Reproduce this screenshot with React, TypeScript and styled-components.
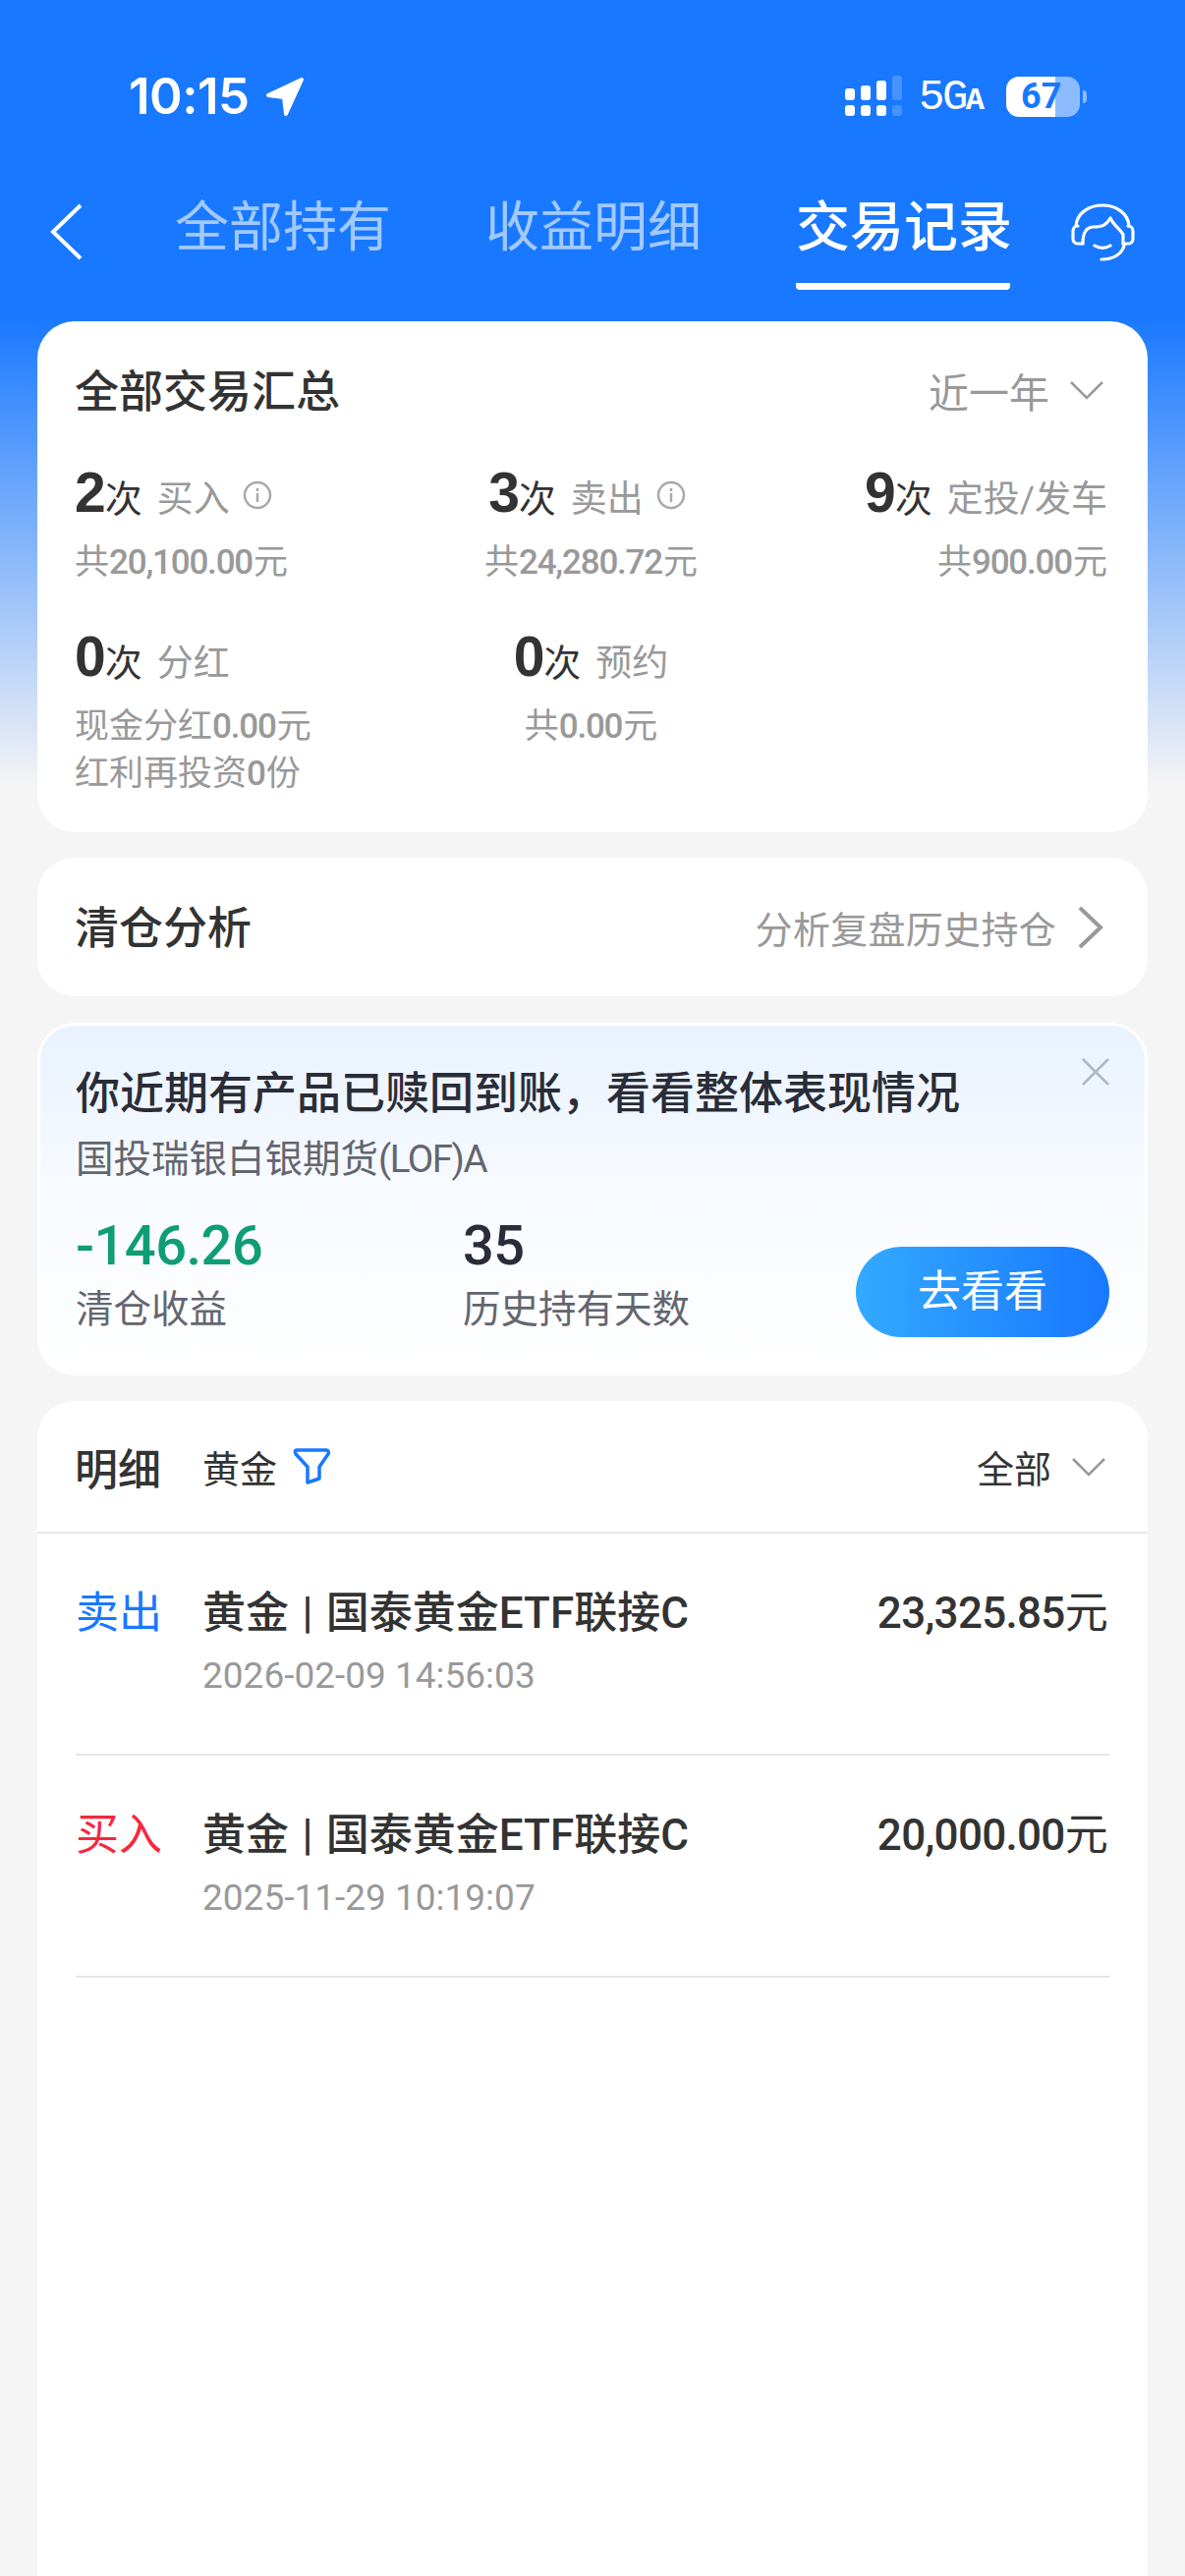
import React, { FC } from "react";
import styled, { createGlobalStyle } from "styled-components";

const GlobalStyle = createGlobalStyle`
  html, body {
    margin: 0;
    padding: 0;
  }
  body {
    font-family: Roboto, "Noto Sans CJK SC", sans-serif;
  }
`;

const Page = styled.div`
  width: 1206px;
  height: 2622px;
  overflow: hidden;
  display: flex;
  flex-direction: column;
  background: linear-gradient(to bottom, #1878ff 0, #1878ff 320px, #f5f5f5 800px);
`;

const StatusBar = styled.div`
  height: 56px;
  padding: 70px 0 0 131px;
  display: flex;
  align-items: center;
  color: #fff;
`;

const Clock = styled.span`
  font-family: Inter, sans-serif;
  font-size: 51px;
  font-weight: 600;
  letter-spacing: -0.500px;
  line-height: 56px;
  width: 139px;
`;

const ArrowIcon = styled.svg`
  width: 41px;
  height: 40px;
`;

const SignalIcon = styled.svg`
  width: 60px;
  height: 42px;
  margin-left: 547px;
`;

const NetworkLabel = styled.span`
  font-family: "Liberation Mono", monospace;
  font-size: 44px;
  letter-spacing: -2.500px;
  line-height: 42px;
  margin-left: 17px;
  padding-top: 5px;
  width: 89px;
  small {
    font-size: 32px;
    font-weight: 700;
    letter-spacing: 0;
  }
`;

const Battery = styled.div`
  position: relative;
  width: 75px;
  height: 41px;
  border-radius: 13px;
  background: linear-gradient(to right, #fff 0, #fff 50px, rgba(255, 255, 255, 0.5) 50px);
  color: #1878ff;
  font-size: 36px;
  font-weight: 700;
  line-height: 41px;
  padding-left: 15px;
  box-sizing: border-box;
  &::after {
    content: "";
    position: absolute;
    left: 78px;
    top: 14px;
    width: 4px;
    height: 13px;
    border-radius: 0 6px 6px 0;
    background: rgba(255, 255, 255, 0.5);
  }
`;

const NavBar = styled.div`
  display: flex;
  align-items: flex-start;
  margin-top: 66px;
  padding-left: 50px;
`;

const BackIcon = styled.svg`
  width: 34px;
  height: 58px;
  margin: 15px 94px 0 0;
`;

const Tabs = styled.div`
  display: flex;
  gap: 98px;
`;

const Tab = styled.div<{ $active?: boolean }>`
  width: 218px;
  font-size: 55px;
  font-weight: ${(p) => (p.$active ? 500 : 400)};
  line-height: 72px;
  color: ${(p) => (p.$active ? "#fff" : "rgba(255, 255, 255, 0.6)")};
  text-align: center;
  white-space: nowrap;
  padding: 3px 0 21px;
  border-bottom: 7px solid ${(p) => (p.$active ? "#fff" : "transparent")};
  border-radius: 0 0 4px 4px;
`;

const HeadsetIcon = styled.svg`
  width: 90px;
  height: 80px;
  margin: 5px 0 0 52px;
`;

const Card = styled.div`
  margin: 0 38px;
  background: #fff;
  border-radius: 38px;
  box-sizing: border-box;
`;

const SummaryCard = styled(Card)`
  margin-top: 32px;
  padding: 40px 41px 35px 38px;
`;

const CardHead = styled.div`
  display: flex;
  justify-content: space-between;
  align-items: center;
  height: 60px;
`;

const CardTitle = styled.div`
  font-size: 45px;
  font-weight: 500;
  color: #333;
  line-height: 60px;
  padding-top: 5px;
`;

const RangePicker = styled.div`
  display: flex;
  align-items: center;
  gap: 20px;
  padding-right: 3px;
  font-size: 41px;
  color: #999;
`;

const Caret = styled.svg`
  width: 36px;
  height: 22px;
`;

const StatGrid = styled.div`
  display: grid;
  grid-template-columns: repeat(3, 1fr);
  row-gap: 41px;
  margin-top: 44px;
`;

const StatCell = styled.div<{ $align: string }>`
  display: flex;
  flex-direction: column;
  align-items: ${(p) => p.$align};
  gap: 18px;
`;

const StatTop = styled.div`
  display: flex;
  align-items: baseline;
  height: 60px;
  line-height: 60px;
  white-space: nowrap;
`;

const StatCount = styled.span`
  font-family: "Liberation Sans", sans-serif;
  font-size: 57px;
  font-weight: 700;
  letter-spacing: -3px;
  color: #333;
`;

const StatUnit = styled.span`
  font-size: 38px;
  color: #333;
  margin-left: 2px;
`;

const StatName = styled.span`
  font-size: 37px;
  color: #999;
  margin-left: 15px;
`;

const InfoIcon = styled.svg`
  width: 30px;
  height: 30px;
  margin: 6px 8px 0 13px;
  align-self: center;
`;

const StatNote = styled.div`
  font-size: 35px;
  line-height: 48px;
  color: #999;
  white-space: nowrap;
  b {
    font-weight: 500;
    letter-spacing: -1.200px;
    margin-right: 1px;
  }
`;

const ClearCard = styled(Card)`
  margin-top: 26px;
  height: 141px;
  padding: 0 43px 0 38px;
  display: flex;
  align-items: center;
  justify-content: space-between;
`;

const ClearHint = styled.div`
  display: flex;
  align-items: center;
  gap: 22px;
  font-size: 38px;
  letter-spacing: 0.300px;
  color: #999;
`;

const ChevronIcon = styled.svg`
  width: 28px;
  height: 44px;
`;

const BannerCard = styled(Card)`
  position: relative;
  margin-top: 27px;
  height: 359px;
  border: 3px solid #fff;
  padding: 36px 36px 0;
  background: linear-gradient(to bottom, #e9f2ff 0, #f8fbff 50%, #fff 100%);
  background-origin: border-box;
`;

const CloseIcon = styled.svg`
  position: absolute;
  right: 35px;
  top: 32px;
  width: 30px;
  height: 30px;
`;

const BannerTitle = styled.div`
  font-size: 45px;
  font-weight: 500;
  line-height: 60px;
  padding-top: 4px;
  margin-bottom: -4px;
  color: #2a2d38;
  white-space: nowrap;
`;

const BannerSub = styled.div`
  margin-top: 15px;
  font-size: 38.500px;
  line-height: 50px;
  color: #63666f;
  span {
    letter-spacing: -1.500px;
  }
`;

const BannerFoot = styled.div`
  display: flex;
  align-items: flex-end;
  margin-top: 33px;
`;

const BannerStat = styled.div<{ $width: number }>`
  width: ${(p) => p.$width}px;
  flex: none;
`;

const BannerValue = styled.div<{ $color: string }>`
  font-size: 56px;
  font-weight: 500;
  letter-spacing: -0.500px;
  line-height: 60px;
  color: ${(p) => p.$color};
`;

const BannerLabel = styled.div`
  margin-top: 7px;
  font-size: 38.500px;
  line-height: 56px;
  color: #63666f;
`;

const GoButton = styled.div`
  margin-left: auto;
  width: 258px;
  height: 92px;
  border-radius: 46px;
  background: linear-gradient(to right, #33a9ff, #1878ff);
  color: #fff;
  font-size: 44px;
  line-height: 92px;
  text-align: center;
`;

const DetailCard = styled(Card)`
  flex: 1;
  margin-top: 26px;
  border-radius: 38px 38px 0 0;
`;

const DetailHead = styled.div`
  display: flex;
  align-items: center;
  height: 133px;
  padding: 0 42px 0 38px;
  border-bottom: 2px solid #e6e6e6;
`;

const DetailTitle = styled.div`
  font-size: 44px;
  font-weight: 500;
  color: #333;
  width: 130px;
`;

const FilterName = styled.div`
  font-size: 38px;
  color: #333;
`;

const FilterIcon = styled.svg`
  width: 40px;
  height: 38px;
  margin: 1px 0 0 16px;
`;

const TypeFilter = styled.div`
  margin-left: auto;
  display: flex;
  align-items: center;
  gap: 20px;
  font-size: 38px;
  color: #333;
`;

const TradeRow = styled.div`
  display: flex;
  margin: 0 39px;
  padding: 51px 0 54px;
  border-bottom: 2px solid #e6e6e6;
`;

const TradeType = styled.div<{ $color: string }>`
  width: 129px;
  font-size: 44px;
  line-height: 60px;
  color: ${(p) => p.$color};
`;

const TradeBody = styled.div`
  flex: 1;
`;

const TradeName = styled.div`
  font-size: 44px;
  font-weight: 500;
  line-height: 60px;
  word-spacing: 2.500px;
  color: #333;
`;

const TradeTime = styled.div`
  margin-top: 9px;
  font-size: 37px;
  line-height: 50px;
  color: #999;
`;

const TradeAmount = styled.div`
  font-size: 44px;
  font-weight: 500;
  line-height: 60px;
  letter-spacing: -0.700px;
  padding-right: 2px;
  color: #333;
  span {
    font-weight: 400;
  }
`;

const Info: FC = () => (
  <InfoIcon viewBox="0 0 30 30" fill="none" stroke="#aaa" strokeWidth="2.500">
    <circle cx="15" cy="15" r="13" />
    <path d="M15 13v9M15 8v3" />
  </InfoIcon>
);

const CaretDown: FC = () => (
  <Caret viewBox="0 0 36 22" fill="none" stroke="#999" strokeWidth="2.500">
    <path d="M2 3l16 16L34 3" />
  </Caret>
);

const trades = [
  { type: "卖出", color: "#1878ff", time: "2026-02-09 14:56:03", amount: "23,325.85" },
  { type: "买入", color: "#f5283f", time: "2025-11-29 10:19:07", amount: "20,000.00" },
];

const App: FC = () => {
  return (
    <Page>
      <GlobalStyle />
      <StatusBar>
        <Clock>10:15</Clock>
        <ArrowIcon viewBox="0 0 41 40">
          <path d="M37 3L3 19l16 2 2 17z" fill="#fff" stroke="#fff" strokeWidth="4" strokeLinejoin="round" />
        </ArrowIcon>
        <SignalIcon viewBox="0 0 60 42">
          <g fill="#fff">
            <rect x="2" y="30" width="10" height="11" rx="3" />
            <rect x="18" y="30" width="10" height="11" rx="3" />
            <rect x="34" y="30" width="10" height="11" rx="3" />
            <rect x="2" y="13" width="10" height="12" rx="3" />
            <rect x="18" y="10" width="10" height="15" rx="3" />
            <rect x="34" y="5" width="10" height="20" rx="3" />
          </g>
          <g fill="#fff" opacity="0.2">
            <rect x="50" y="30" width="10" height="11" rx="3" />
            <rect x="50" y="0" width="10" height="25" rx="3" />
          </g>
        </SignalIcon>
        <NetworkLabel>
          5G<small>A</small>
        </NetworkLabel>
        <Battery>67</Battery>
      </StatusBar>

      <NavBar>
        <BackIcon viewBox="0 0 34 58" fill="none" stroke="#fff" strokeWidth="4">
          <path d="M32 2L4 29l28 27" />
        </BackIcon>
        <Tabs>
          <Tab>全部持有</Tab>
          <Tab>收益明细</Tab>
          <Tab $active>交易记录</Tab>
        </Tabs>
        <HeadsetIcon viewBox="0 0 90 80" fill="none" stroke="#fff" strokeWidth="3.200" strokeLinecap="round" strokeLinejoin="round">
          <path d="M15 33C16 20 28 12 42 12s26 8 27 21" />
          <path d="M22 51h-5a5 5 0 0 1-5-5v-8a5 5 0 0 1 5-5" />
          <path d="M22 51C22 40 25 34 33 34 42 34 46 32 50 25 53 32 60 36 63 42V51" />
          <path d="M63 51h5a5 5 0 0 0 5-5v-8a5 5 0 0 0-5-5" />
          <path d="M34 53c5 3 11 3 16 0" />
          <path d="M64 53c-2 8-10 14-23 14" />
        </HeadsetIcon>
      </NavBar>

      <SummaryCard>
        <CardHead>
          <CardTitle>全部交易汇总</CardTitle>
          <RangePicker>
            近一年
            <CaretDown />
          </RangePicker>
        </CardHead>
        <StatGrid>
          <StatCell $align="flex-start">
            <StatTop>
              <StatCount>2</StatCount>
              <StatUnit>次</StatUnit>
              <StatName>买入</StatName>
              <Info />
            </StatTop>
            <StatNote>
              共<b>20,100.00</b>元
            </StatNote>
          </StatCell>
          <StatCell $align="center">
            <StatTop>
              <StatCount>3</StatCount>
              <StatUnit>次</StatUnit>
              <StatName>卖出</StatName>
              <Info />
            </StatTop>
            <StatNote>
              共<b>24,280.72</b>元
            </StatNote>
          </StatCell>
          <StatCell $align="flex-end">
            <StatTop>
              <StatCount>9</StatCount>
              <StatUnit>次</StatUnit>
              <StatName>定投/发车</StatName>
            </StatTop>
            <StatNote>
              共<b>900.00</b>元
            </StatNote>
          </StatCell>
          <StatCell $align="flex-start">
            <StatTop>
              <StatCount>0</StatCount>
              <StatUnit>次</StatUnit>
              <StatName>分红</StatName>
            </StatTop>
            <StatNote>
              现金分红<b>0.00</b>元
              <br />
              红利再投资<b>0</b>份
            </StatNote>
          </StatCell>
          <StatCell $align="center">
            <StatTop>
              <StatCount>0</StatCount>
              <StatUnit>次</StatUnit>
              <StatName>预约</StatName>
            </StatTop>
            <StatNote>
              共<b>0.00</b>元
            </StatNote>
          </StatCell>
        </StatGrid>
      </SummaryCard>

      <ClearCard>
        <CardTitle>清仓分析</CardTitle>
        <ClearHint>
          分析复盘历史持仓
          <ChevronIcon viewBox="0 0 28 44" fill="none" stroke="#999" strokeWidth="4">
            <path d="M2 2l21 20-21 20" />
          </ChevronIcon>
        </ClearHint>
      </ClearCard>

      <BannerCard>
        <CloseIcon viewBox="0 0 30 30" fill="none" stroke="#aeb8c2" strokeWidth="2.500">
          <path d="M2 2l26 26M28 2L2 28" />
        </CloseIcon>
        <BannerTitle>{"你近期有产品已赎回到账\uFF0C看看整体表现情况"}</BannerTitle>
        <BannerSub>
          国投瑞银白银期货<span>(LOF)A</span>
        </BannerSub>
        <BannerFoot>
          <BannerStat $width={394}>
            <BannerValue $color="#0f9d75">-146.26</BannerValue>
            <BannerLabel>清仓收益</BannerLabel>
          </BannerStat>
          <BannerStat $width={300}>
            <BannerValue $color="#2a2d38">35</BannerValue>
            <BannerLabel>历史持有天数</BannerLabel>
          </BannerStat>
          <GoButton>去看看</GoButton>
        </BannerFoot>
      </BannerCard>

      <DetailCard>
        <DetailHead>
          <DetailTitle>明细</DetailTitle>
          <FilterName>黄金</FilterName>
          <FilterIcon viewBox="0 0 40 38" fill="none" stroke="#1878ff" strokeWidth="3.500" strokeLinejoin="round">
            <path d="M4 2h30c2 0 3 2 2 4L27 19v12l-12 4V19L3 6C2 4 2 2 4 2z" />
          </FilterIcon>
          <TypeFilter>
            全部
            <CaretDown />
          </TypeFilter>
        </DetailHead>
        {trades.map((t) => (
          <TradeRow key={t.time}>
            <TradeType $color={t.color}>{t.type}</TradeType>
            <TradeBody>
              <TradeName>黄金 | 国泰黄金ETF联接C</TradeName>
              <TradeTime>{t.time}</TradeTime>
            </TradeBody>
            <TradeAmount>
              {t.amount}
              <span>元</span>
            </TradeAmount>
          </TradeRow>
        ))}
      </DetailCard>
    </Page>
  );
};

export default App;
